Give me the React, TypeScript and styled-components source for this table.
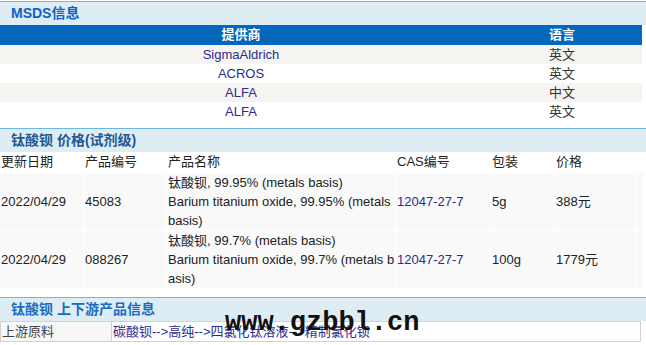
import React from "react";
import styled, { createGlobalStyle } from "styled-components";

const Global = createGlobalStyle`
  html, body { margin: 0; padding: 0; background: #fff; }
  body {
    font-family: "Liberation Sans", Arial, "Noto Sans CJK SC", sans-serif;
    font-size: 13px;
    color: #222;
  }
`;

const Page = styled.div`
  position: relative;
  width: 646px;
  padding-top: 1px;
`;

const Section = styled.section<{ $gap?: number }>`
  border-top: 1px solid #6cb9e0;
  margin-bottom: ${(p) => p.$gap ?? 0}px;
`;

const SectionTitle = styled.div<{ $color: string }>`
  height: 23px;
  line-height: 23px;
  padding-left: 11px;
  background: #deecf4;
  color: ${(p) => p.$color};
  font-size: 14px;
  font-weight: bold;
  font-family: "Liberation Sans", Arial, "Noto Sans CJK SC", sans-serif;
`;

/* MSDS table */
const MsdsTable = styled.div`
  width: 642px;
  display: grid;
  grid-template-columns: 482px 160px;
`;

const MsdsHead = styled.div`
  height: 20px;
  line-height: 20px;
  background: #0467bb;
  color: #fff;
  font-weight: bold;
  text-align: center;
`;

const MsdsCell = styled.div<{ $alt: boolean; $link?: boolean }>`
  height: 19px;
  line-height: 19px;
  text-align: center;
  background: ${(p) => (p.$alt ? "#f5f4f0" : "#fff")};
  color: ${(p) => (p.$link ? "#2c2c90" : "#333")};
`;

/* Price table */
const PriceTable = styled.div`
  width: 643px;
  display: grid;
  grid-template-columns: 83px 82px 228px 94px 63px 81px 6px;
  column-gap: 1px;
  row-gap: 1px;
`;

const HeadCell = styled.div`
  height: 20px;
  line-height: 20px;
  padding-left: 1px;
  color: #222;
  white-space: nowrap;
`;

const DataCell = styled.div<{ $link?: boolean; $wrap?: boolean }>`
  min-height: 57px;
  line-height: 19px;
  padding-left: 1px;
  background: #f9f9f9;
  color: ${(p) => (p.$link ? "#2c2c90" : "#222")};
  display: flex;
  align-items: center;
  word-break: ${(p) => (p.$wrap ? "break-all" : "normal")};
`;

/* Upstream */
const UpRow = styled.div`
  width: 639px;
  display: grid;
  grid-template-columns: 111px 1fr;
  border: 1px solid #d2d2d2;
  height: 19px;
  line-height: 19px;
`;

const UpLabel = styled.div`
  padding-left: 1px;
  background: #f7f7f7;
  border-right: 1px solid #d2d2d2;
  color: #444;
`;

const UpLinks = styled.div`
  padding-left: 1px;
  color: #2c2c90;
  white-space: nowrap;
  overflow: hidden;
`;

const Watermark = styled.div`
  position: absolute;
  left: 225px;
  top: 310px;
  font-family: "Liberation Mono", "Courier New", monospace;
  font-weight: bold;
  font-size: 27px;
  line-height: 27px;
  color: #111;
  pointer-events: none;
`;

const msds = [
  { p: "SigmaAldrich", l: "英文" },
  { p: "ACROS", l: "英文" },
  { p: "ALFA", l: "中文" },
  { p: "ALFA", l: "英文" },
];

const prices = [
  {
    date: "2022/04/29",
    no: "45083",
    name: ["钛酸钡, 99.95% (metals basis)", "Barium titanium oxide, 99.95% (metals basis)"],
    cas: "12047-27-7",
    pack: "5g",
    price: "388元",
  },
  {
    date: "2022/04/29",
    no: "088267",
    name: ["钛酸钡, 99.7% (metals basis)", "Barium titanium oxide, 99.7% (metals basis)"],
    cas: "12047-27-7",
    pack: "100g",
    price: "1779元",
  },
];

export default function App() {
  return (
    <Page>
      <Global />
      <Section $gap={7}>
        <SectionTitle $color="#0d62c9">MSDS信息</SectionTitle>
        <MsdsTable>
          <MsdsHead>提供商</MsdsHead>
          <MsdsHead>语言</MsdsHead>
          {msds.map((r, i) => (
            <React.Fragment key={i}>
              <MsdsCell $alt={i % 2 === 0} $link>
                {r.p}
              </MsdsCell>
              <MsdsCell $alt={i % 2 === 0}>{r.l}</MsdsCell>
            </React.Fragment>
          ))}
        </MsdsTable>
      </Section>

      <Section $gap={9}>
        <SectionTitle $color="#24578f">钛酸钡 价格(试剂级)</SectionTitle>
        <PriceTable>
          <HeadCell>更新日期</HeadCell>
          <HeadCell>产品编号</HeadCell>
          <HeadCell>产品名称</HeadCell>
          <HeadCell>CAS编号</HeadCell>
          <HeadCell>包装</HeadCell>
          <HeadCell>价格</HeadCell>
          <HeadCell />
          {prices.map((r, i) => (
            <React.Fragment key={i}>
              <DataCell>{r.date}</DataCell>
              <DataCell>{r.no}</DataCell>
              <DataCell $wrap>
                <span>
                  {r.name[0]}
                  <br />
                  {r.name[1]}
                </span>
              </DataCell>
              <DataCell $link>{r.cas}</DataCell>
              <DataCell>{r.pack}</DataCell>
              <DataCell>{r.price}</DataCell>
              <DataCell />
            </React.Fragment>
          ))}
        </PriceTable>
      </Section>

      <Section>
        <SectionTitle $color="#1a6cc0">钛酸钡 上下游产品信息</SectionTitle>
        <UpRow>
          <UpLabel>上游原料</UpLabel>
          <UpLinks>碳酸钡--&gt;高纯--&gt;四氯化钛溶液--&gt;精制氯化钡</UpLinks>
        </UpRow>
      </Section>

      <Watermark>www.gzbbl.cn</Watermark>
    </Page>
  );
}
